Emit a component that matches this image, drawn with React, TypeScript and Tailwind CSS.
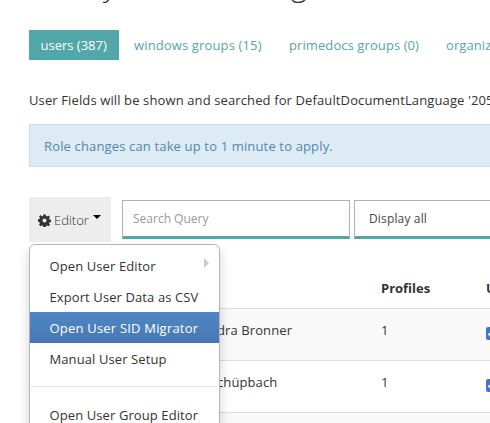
import { clsx } from 'clsx'

const tabs = [
  { label: 'users (387)', className: 'w-[90px] bg-[#52a7a8] pl-[11.5px] text-white' },
  { label: 'windows groups (15)', className: 'w-[155px] pl-[15px] tracking-[0.14px] text-[#55a6a7]' },
  { label: 'primedocs groups (0)', className: 'w-[157px] pl-[15px] tracking-[0.09px] text-[#55a6a7]' },
  { label: 'organizations', className: 'w-[155px] pl-[15px] tracking-[0.09px] text-[#55a6a7]' },
]

const rows = [
  { name: 'dra Bronner', profiles: 1 },
  { name: 'chüpbach', profiles: 1 },
]

const menuItems = [
  { label: 'Open User Editor', submenu: true },
  { label: 'Export User Data as CSV' },
  { label: 'Open User SID Migrator', active: true },
  { label: 'Manual User Setup' },
]

function GearIcon() {
  return (
    <svg viewBox="0 0 16 16" className="h-[13px] w-[13px] shrink-0 fill-[#333]">
      <path
        fillRule="evenodd"
        d="M6.5.5h3l.4 2 1.2.5 1.7-1.2 2 2-1.2 1.7.5 1.2 1.9.3v3l-1.9.3-.5 1.2 1.2 1.7-2 2-1.7-1.2-1.2.5-.4 1.9h-3l-.4-1.9-1.2-.5-1.7 1.2-2-2 1.2-1.7-.5-1.2L0 9.500v-3l1.900-.3.500-1.200L1.200 3.300l2-2L4.900 3l1.200-.5zM8 5.500a2.500 2.500 0 1 0 0 5 2.500 2.500 0 0 0 0-5z"
      />
    </svg>
  )
}

function EditorMenu() {
  return (
    <div className="absolute left-0 top-[47px] z-10 h-[220px] w-[191px] rounded-md border border-[#b5b5b5] bg-white pt-[5px] tracking-[0.1px] shadow-[0_6px_12px_rgba(0,0,0,0.18)]">
      {menuItems.map((item) => (
        <div
          key={item.label}
          className={clsx(
            'flex h-[31px] items-center justify-between pl-[19.5px] pr-[10px]',
            item.active && 'bg-linear-to-b from-[#5087c7] to-[#4678b3] tracking-[0.2px] text-white',
          )}
        >
          <span>{item.label}</span>
          {item.submenu && (
            <span className="mb-[6px] h-0 w-0 border-y-[5px] border-l-[5px] border-y-transparent border-l-[#ccc]" />
          )}
        </div>
      ))}
      <div className="mx-px mb-[12px] mt-[12px] h-px bg-[#e5e5e5]" />
      <div className="flex h-[31px] items-center pl-[19.5px]">Open User Group Editor</div>
    </div>
  )
}

export default function App() {
  return (
    <div className="h-[423px] w-[490px] overflow-hidden whitespace-nowrap bg-white pl-[29px] font-['Open_Sans','Noto_Sans',sans-serif] text-[13px] leading-5 text-[#333]">
      <div className="flex h-[30px] items-start overflow-hidden pl-[74px] text-[30px] font-light leading-[34px]">
        <span className="-mt-[32px] w-[188px]">y</span>
        <span className="-mt-[32px]">g</span>
      </div>

      <nav className="flex h-[30px]">
        {tabs.map((tab) => (
          <div key={tab.label} className={clsx('flex shrink-0 items-center', tab.className)}>
            {tab.label}
          </div>
        ))}
      </nav>

      <p className="mt-[30px] tracking-[0.12px]">
        User Fields will be shown and searched for DefaultDocumentLanguage '2055'
      </p>

      <div className="mt-[14px] flex h-[43px] w-[520px] items-center border border-[#bfe3eb] bg-[#ddebf4] pl-[14px] tracking-[0.15px] text-[#5686b0]">
        Role changes can take up to 1 minute to apply.
      </div>

      <div className="relative mt-[30px] flex h-[45px]">
        <button className="flex h-[45px] w-[82px] shrink-0 items-center bg-[#ededed] pl-[9px] pt-px">
          <GearIcon />
          <span className="ml-[3px] font-light">Editor</span>
          <span className="mb-[6px] ml-[4px] h-0 w-0 border-x-4 border-t-4 border-x-transparent border-t-black" />
        </button>
        <div className="ml-[11px] mt-[3px] flex h-[39px] w-[228px] shrink-0 items-center border border-b-[3px] border-[#b0b0b0] border-b-[#52a7a8] pl-[10px] pt-px text-[12px] text-[#999]">
          Search Query
        </div>
        <div className="ml-1 mt-[3px] flex h-[39px] w-[228px] shrink-0 items-center border border-b-[3px] border-[#b0b0b0] border-b-[#52a7a8] pl-[14px] pt-px text-[12px] tracking-[0.15px] text-[#444]">
          Display all
        </div>
        <EditorMenu />
      </div>

      <div className="w-[520px]">
        <div className="flex h-[66px] pt-[36px] font-bold">
          <span className="w-[352px]" />
          <span className="w-[105px]">Profiles</span>
          <span>User</span>
        </div>
        {rows.map((row) => (
          <div key={row.name} className="flex h-[52px] border-t border-[#ddd] pt-[11px] odd:bg-white even:bg-[#f9f9f9]">
            <span className="w-[352px] pl-[188px] tracking-[0.1px]">{row.name}</span>
            <span className="w-[105px]">{row.profiles}</span>
            <span className="mt-[7px] flex h-[13px] w-[13px] items-center justify-center rounded-[2px] bg-[#3b76d1]">
              <svg viewBox="0 0 13 13" className="h-[13px] w-[13px] fill-none stroke-white stroke-[2]">
                <path d="M2.5 6.5 5.5 9.5 10.5 3.5" />
              </svg>
            </span>
          </div>
        ))}
        <div className="h-[52px] border-t border-[#ddd] bg-[#f9f9f9]" />
      </div>
    </div>
  )
}
